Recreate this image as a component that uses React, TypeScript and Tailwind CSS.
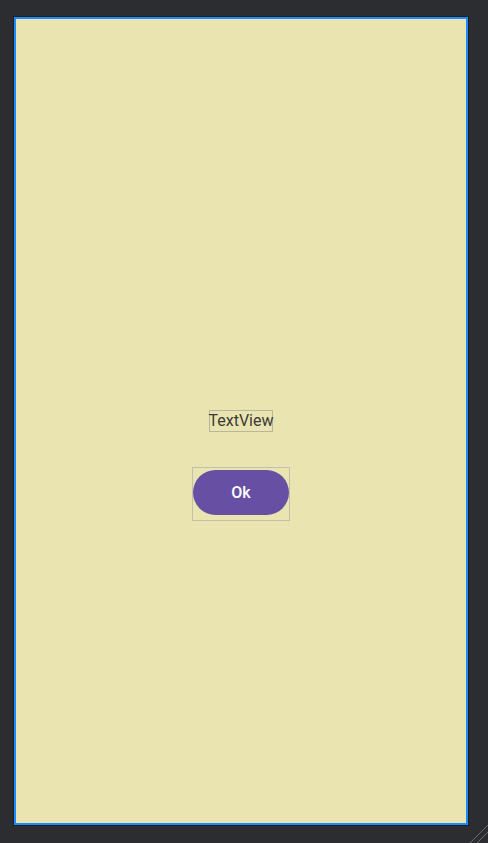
export default function App() {
  return (
    <div className="relative w-[488px] h-[843px] bg-[#2b2d30] overflow-hidden" style={{ fontFamily: "Roboto, 'Noto Sans', sans-serif" }}>
      <div className="absolute left-[13px] top-[16px] w-[456px] h-[810px] bg-[#1e1f22]" />
      <div className="absolute left-[14px] top-[17px] w-[454px] h-[808px] border-2 border-[#1a8cff] bg-[#eae5b0] flex flex-col items-center">
        <div className="h-[391px]" />
        <div className="border border-[#b9b6a0] h-[22px] w-[64px] flex items-center justify-center text-[16px] text-[#3a3a3a] leading-none whitespace-nowrap">
          TextView
        </div>
        <div className="h-[35px]" />
        <div className="border border-[#c2bfae] w-[98px] h-[54px] flex items-start justify-center pt-[2px]">
          <div className="w-[96px] h-[45px] rounded-full bg-[#6750a4] text-white text-[16px] font-medium flex items-center justify-center">
            Ok
          </div>
        </div>
      </div>
      <svg className="absolute right-0 bottom-0" width="20" height="20" viewBox="0 0 20 20">
        <line x1="2" y1="20" x2="20" y2="2" stroke="#6b6d70" strokeWidth="1" />
        <line x1="9" y1="20" x2="20" y2="9" stroke="#6b6d70" strokeWidth="1" />
      </svg>
    </div>
  );
}
